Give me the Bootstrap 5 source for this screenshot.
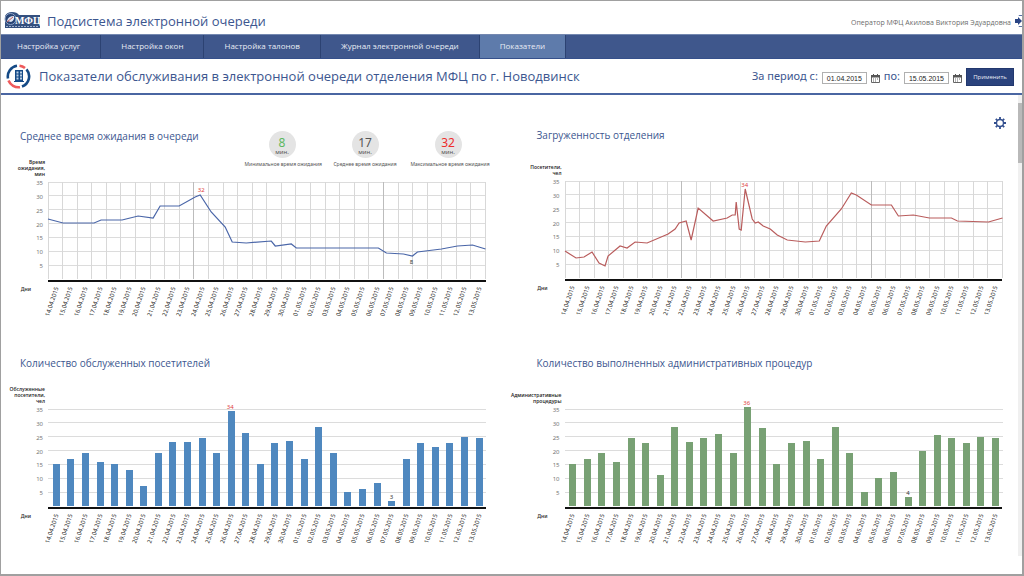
<!DOCTYPE html>
<html lang="ru">
<head>
<meta charset="utf-8">
<meta name="viewport" content="width=device-width, initial-scale=1">
<title>Подсистема электронной очереди</title>
<link href="https://cdn.jsdelivr.net/npm/bootstrap@5.3.0/dist/css/bootstrap.min.css" rel="stylesheet">
<style>
  :root { --navy: #3f578c; --ink: #3c568f; }
  body { font-family: "Noto Sans", "Open Sans", sans-serif; font-size: 9px; line-height: 12px; color: #333; background: #fff; }
  .frame { border: 1px solid #a0a0a0; border-right-width: 2px; border-bottom-width: 2px; }
  .app-head { height: 33px; padding: 6px 0 0 3px; }
  .app-name { font-family: "Open Sans", sans-serif; font-size: 13px; line-height: 18px; margin-left: 6px; color: var(--ink); }
  .operator { font-family: "Open Sans", sans-serif; font-size: 7px; line-height: 10px; color: #6c6c6c; }
  .exit-btn, .icon-btn { border: 0; padding: 0; background: none; line-height: 0; }
  .main-nav { background: var(--navy); border-top: 1px solid #7488b0; border-bottom: 1px solid #35508b; }
  .main-nav .nav-link { font-family: "Open Sans", sans-serif; font-size: 8px; line-height: 12px; padding: 5px 20px 6px; color: #e8ecf4; border-right: 1px solid #2c4272; border-radius: 0; }
  .main-nav .nav-link:first-child { padding-left: 16px; }
  .main-nav .nav-link.active { background: #5e7bab; }
  .title-bar { height: 36px; padding: 0 8px 0 5px; border-bottom: 2px solid #4a66a2; }
  .page-name { font-family: "Open Sans", sans-serif; font-size: 13px; line-height: 18px; font-weight: 400; color: var(--ink); }
  .period { font-size: 11px; line-height: 18px; color: var(--ink); }
  .date-box { width: 45px; height: 12px; margin-top: 4px; padding: 0 3px; border: 1px solid #b0b0b0; border-radius: 0; font-family: "Liberation Sans", sans-serif; font-size: 7px; line-height: 10px; color: #222; text-align: center; }
  .apply { width: 48px; height: 18px; margin-top: 2px; padding: 0; border-radius: 0; font-family: "Open Sans", sans-serif; font-size: 6px; line-height: 14px; --bs-btn-color: #e8ecf4; --bs-btn-bg: #2b437d; --bs-btn-border-color: #22386e; --bs-btn-hover-bg: #22386e; --bs-btn-hover-color: #fff; }
  .board { min-height: calc(100vh - 99px); }
  .scroll-rail { width: 4px; background: #f0f0f0; margin-bottom: 18px; padding-top: 8px; }
  .scroll-thumb { height: 60px; background: #b9b9b9; }
  .gear { position: absolute; right: 16px; top: 22px; }

  .panel-l { padding-right: 24px; --axis: 47px; }
  .panel-r { padding-right: 16px; --axis: 55px; }
  .top-l { padding-top: 30px; }
  .top-r { padding-top: 29px; }
  .lower { padding-top: 32px; }
  .chart { display: grid; grid-template-columns: var(--axis) minmax(0, 1fr); grid-template-rows: 22px 35px 98px auto; }
  .chart h2 { grid-area: 1 / 1 / 2 / 3; font-family: "Open Sans", sans-serif; font-size: 10px; line-height: 22px; margin: 0; color: var(--ink); font-weight: 400; }
  .panel-l h2 { padding-left: 19px; }
  .panel-r h2 { padding-left: 27px; }
  .kpis { grid-area: 1 / 2 / 3 / 3; justify-self: end; align-self: start; padding-top: 6px; }
  .kpi { width: 75px; text-align: center; white-space: nowrap; font-size: 5px; line-height: 8px; color: #555; }
  .kpi-disc { width: 27px; height: 27px; border-radius: 50%; background: #e4e4e4; margin: 0 auto 2px; padding-top: 6px; font-size: 6px; line-height: 6px; }
  .kpi-disc b { display: block; font-size: 12px; line-height: 12px; font-weight: 400; }
  .axis-name { grid-area: 2 / 1 / 3 / 2; align-self: end; text-align: right; padding: 0 3px 5px 0; font-family: "Open Sans", sans-serif; font-size: 5px; line-height: 6px; font-weight: 600; color: #222; white-space: pre-line; }
  .ticks { grid-area: 3 / 1 / 4 / 2; height: 97px; margin-top: -6px; padding-right: 5px; font-size: 6px; line-height: 8px; color: #777; }
  .plot { grid-area: 3 / 2 / 4 / 3; position: relative; border-bottom: 2px solid #111; height: 100px; padding-bottom: 1px; }
  .plot svg { position: absolute; left: 0; top: 0; width: 100%; height: 97px; overflow: visible; }
  .plot svg * { vector-effect: non-scaling-stroke; fill: none; }
  .bars { position: relative; height: 97px; }
  .bars .bar { width: 7px; margin-left: 2px; }
  .point { position: absolute; transform: translate(-50%, -50%); font-size: 6px; line-height: 6px; color: #333; }
  .point.peak { color: #e0403c; }
  .days-name { grid-area: 4 / 1 / 5 / 2; padding: 6px 17px 0 0; text-align: right; font-size: 5px; line-height: 6px; font-weight: 600; color: #333; }
  .days { grid-area: 4 / 2 / 5 / 3; height: 40px; padding-top: 4px; }
  .day { padding-right: 6px; min-width: 0; }
  .day span { white-space: nowrap; font-size: 6px; line-height: 6px; color: #222; transform: rotate(-72deg); transform-origin: right center; }
</style>
</head>
<body>
<div class="frame min-vh-100 d-flex flex-column">
  <header class="app-head d-flex align-items-center">
    <svg width="37" height="17" viewBox="0 0 37 17" role="img" aria-label="МФЦ">
      <path d="M1 4Q3 0 8 0t7 3h21v13H1z" fill="#34507f"/>
      <circle cx="6.500" cy="7" r="5.500" fill="#274374" stroke="#8fa3c6" stroke-width="1"/>
      <path d="M3 9Q4 4 10 4 11 8 7 10z" fill="#dfe6f1"/><path d="M3 10l6-5" stroke="#c65b5b" stroke-width="1"/>
      <text x="11" y="12" font-family="Liberation Serif, serif" font-size="10" font-weight="700" fill="#fff">МФЦ</text>
      <path d="M2 14.500h33" stroke="#9fb0cf" stroke-width="1" stroke-dasharray="2 1"/>
    </svg>
    <span class="app-name">Подсистема электронной очереди</span>
    <span class="operator ms-auto me-1 pt-1">Оператор МФЦ Акилова Виктория Эдуардовна</span>
    <button class="exit-btn" type="button" aria-label="Выход">
      <svg width="7" height="12" viewBox="0 0 7 12"><path d="M0 4h3V2l4 4-4 4V8H0z" fill="#2a4585"/><path d="M4 1V.5h3M4 11v.5h3" fill="none" stroke="#5a72a8"/></svg>
    </button>
  </header>

  <nav class="main-nav nav" aria-label="Разделы">
    <a class="nav-link" href="#">Настройка услуг</a>
    <a class="nav-link" href="#">Настройка окон</a>
    <a class="nav-link" href="#">Настройка талонов</a>
    <a class="nav-link" href="#">Журнал электронной очереди</a>
    <a class="nav-link active" aria-current="page" href="#">Показатели</a>
  </nav>

  <form class="title-bar d-flex align-items-center">
    <svg width="25" height="25" viewBox="0 0 25 25" aria-hidden="true">
      <g fill="none" stroke-width="2.600">
        <path d="M13.500 1.700A10.800 10.800 0 0 1 19 4M14 23.200A10.800 10.800 0 0 1 2.500 16.500" stroke="#ee5a5c"/>
        <path d="M11 1.800A10.800 10.800 0 0 0 2 14.500M20.500 5.300A10.800 10.800 0 0 1 16 22.500" stroke="#154a86"/>
      </g>
      <path d="M9 6h8v11h1v1H8v-1h1z" fill="#154a86"/>
      <path d="M10.500 7.500h2v2h-2zm3.500 0h2v2h-2zm-3.500 3h2v2h-2zm3.500 0h2v2h-2zm-3.500 3h2v2h-2zm3.500 0h2v2h-2z" fill="#bcd0e6"/>
    </svg>
    <h1 class="page-name mb-0 ms-2">Показатели обслуживания в электронной очереди отделения МФЦ по г. Новодвинск</h1>
    <div class="period d-flex align-items-center ms-auto">
      <label for="from">За период с:</label>
      <input class="date-box ms-1" id="from" type="text" value="01.04.2015">
      <button class="icon-btn cal ms-1 mt-1" type="button" aria-label="Выбрать начало"></button>
      <label class="ms-1" for="to">по:</label>
      <input class="date-box ms-1" id="to" type="text" value="15.05.2015">
      <button class="icon-btn cal ms-1 mt-1" type="button" aria-label="Выбрать конец"></button>
      <button class="btn apply ms-1" type="submit">Применить</button>
    </div>
  </form>

  <div class="board d-flex flex-grow-1 position-relative">
    <main class="flex-grow-1">
      <div class="row g-0">
        <div class="col-6"><section class="panel-l top-l" id="wait"></section></div>
        <div class="col-6"><section class="panel-r top-r" id="load"></section></div>
        <div class="col-6"><section class="panel-l lower" id="served"></section></div>
        <div class="col-6"><section class="panel-r lower" id="procs"></section></div>
      </div>
    </main>
    <button class="icon-btn gear" type="button" aria-label="Настройки">
      <svg width="12" height="12" viewBox="-6 -6 12 12"><circle r="3.500" fill="none" stroke="#34508f" stroke-width="1.400"/><path d="M0-6v2.200M0 6V3.800M-6 0h2.200M6 0H3.800M-4.200-4.200l1.500 1.500M4.200 4.200L2.700 2.700M-4.200 4.200l1.500-1.500M4.200-4.200L2.700-2.700" stroke="#34508f" stroke-width="1.800"/></svg>
    </button>
    <div class="scroll-rail flex-shrink-0" aria-hidden="true"><div class="scroll-thumb"></div></div>
  </div>
</div>

<script src="https://cdn.jsdelivr.net/npm/bootstrap@5.3.0/dist/js/bootstrap.bundle.min.js"></script>
<script>
  const W = 437, H = 97, MAX = 35;
  const days = [];
  for (let d = 14; d <= 30; d++) days.push(d + '.04.2015');
  for (let d = 1; d <= 13; d++) days.push(String(d).padStart(2, '0') + '.05.2015');

  document.querySelectorAll('.cal').forEach(b => b.innerHTML =
    '<svg width="9" height="9" viewBox="0 0 9 9"><path d="M.5 1.500h8v7h-8z" fill="#fff" stroke="#666"/><path d="M0 1h9v2.500H0zM2 0h1v1H2zm4 0h1v1H6z" fill="#555"/><path d="M2 5h5M2 7h3" stroke="#666" stroke-dasharray="1 1"/></svg>');

  function grid(strong, vertical) {
    let s = '';
    for (let i = 0; i < 7; i++) s += `<path d="M0 ${i * H / 7}H${W}" stroke="#dcdcdc"/>`;
    if (vertical) for (let i = 0; i <= 30; i++)
      s += `<path d="M${i * W / 30} 0V${H}" stroke="${strong.includes(i) ? '#bcbcbc' : '#d8d8d8'}"/>`;
    return s;
  }

  function draw(id, c) {
    const marks = c.marks.map(m =>
      `<span class="point ${m.peak ? 'peak' : ''}" style="left:${m.x / W * 100}%;top:${m.y}px">${m.text}</span>`).join('');
    const line = c.line ? `<polyline points="${c.line}" stroke="${c.color}" stroke-width="1.200"/>` : '';
    const bars = c.bars ? '<div class="bars d-flex align-items-end">' + c.bars.map(v =>
      `<div class="flex-fill d-flex h-100 align-items-end justify-content-center"><div class="bar" style="height:${v / MAX * 100}%;background:${c.color}"></div></div>`).join('') + '</div>' : '';
    document.getElementById(id).innerHTML = `<div class="chart">
      <h2>${c.title}</h2>${c.extra || ''}
      <div class="axis-name">${c.axis}</div>
      <div class="ticks d-flex flex-column">${[35, 30, 25, 20, 15, 10, 5].map(t => `<div class="flex-fill d-flex align-items-center justify-content-end">${t}</div>`).join('')}</div>
      <div class="plot"><svg viewBox="0 0 ${W} ${H}" preserveAspectRatio="none" aria-hidden="true"><g shape-rendering="crispEdges">${grid(c.strong || [], !!c.line)}</g>${line}</svg>${bars}${marks}</div>
      <div class="days-name">Дни</div>
      <div class="days d-flex">${days.map(d => `<div class="day flex-fill d-flex justify-content-end align-items-start" style="width:${100 / 30}%"><span>${d}</span></div>`).join('')}</div>
    </div>`;
  }

  const kpi = (n, color, text) =>
    `<div class="kpi"><div class="kpi-disc"><b style="color:${color}">${n}</b>мин.</div>${text}</div>`;

  draw('wait', {
    title: 'Среднее время ожидания в очереди', axis: 'Время\nожидания,\nмин', color: '#4a66a8', strong: [10, 23],
    extra: '<div class="kpis d-flex gap-2">' + kpi(8, '#5cb860', 'Минимальное время ожидания') +
      kpi(17, '#555', 'Среднее время ожидания') + kpi(32, '#ee2c2c', 'Максимальное время ожидания') + '</div>',
    line: '0,37 15,41 46,41 53,38 74,38 90,34 105,36 112,24 131,24 147,15 152,13 163,30 177,45 184,60 198,61 223,59 227,64 243,62 248,66 330,66 338,71 355,72 364,74 369,70 393,67 409,64 424,63 437,67',
    marks: [{ x: 153, y: 8, text: 32, peak: true }, { x: 363, y: 80, text: 8 }]
  });
  draw('load', {
    title: 'Загруженность отделения', axis: 'Посетители,\nчел', color: '#b95c5c', strong: [8, 21],
    line: '0,70 11,77 19,76 27,71 34,82 40,85 43,75 55,65 62,67 70,61 82,62 103,53 110,48 114,42 121,40 126,59 133,27 148,40 162,37 167,34 170,34 171,21 174,48 176,49 180,8 187,38 190,42 193,41 198,45 205,48 212,54 222,59 240,61 254,60 261,45 276,28 286,12 291,14 306,24 326,24 333,35 348,34 364,37 386,37 392,40 423,41 437,37',
    marks: [{ x: 180, y: 4, text: 34, peak: true }]
  });
  draw('served', {
    title: 'Количество обслуженных посетителей', axis: 'Обслуженные\nпосетители,\nчел', color: '#4f88bf',
    bars: [15, 17, 19, 16, 15, 13, 7.3, 19, 23.2, 23.2, 24.7, 19, 34.4, 26.5, 15, 22.8, 23.5, 17, 28.6, 19, 5.1, 6.3, 8.2, 1.7, 17, 22.8, 21.3, 22.8, 25, 24.7],
    marks: [{ x: 182, y: -2, text: 34, peak: true }, { x: 343, y: 88, text: 3 }]
  });
  draw('procs', {
    title: 'Количество выполненных административных процедур', axis: 'Административные\nпроцедуры', color: '#78a174',
    bars: [15, 17, 19, 16, 24.7, 22.8, 11.1, 28.6, 23.2, 24.5, 26, 19, 35.8, 28, 15, 22.8, 23.5, 17, 28.6, 19, 5.1, 10.2, 12.1, 3.2, 20, 25.7, 24.4, 22.8, 25, 24.7],
    marks: [{ x: 182, y: -6, text: 36, peak: true }, { x: 343, y: 84, text: 4 }]
  });
</script>
</body>
</html>
